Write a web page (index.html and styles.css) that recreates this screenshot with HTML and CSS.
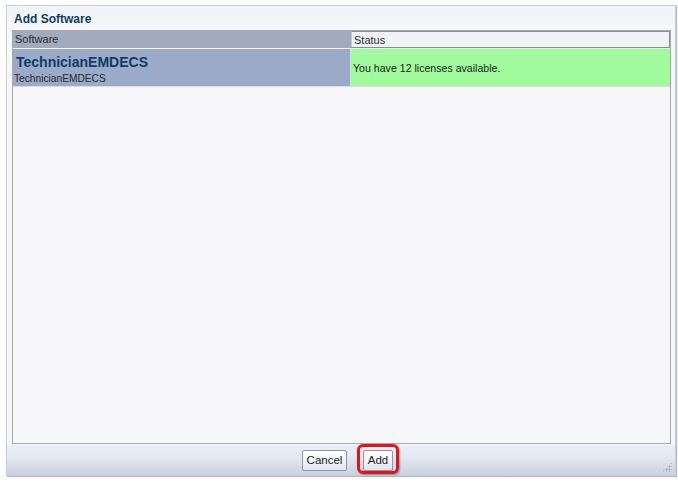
FILE: index.html
```html
<!DOCTYPE html>
<html>
<head>
<meta charset="utf-8">
<link rel="stylesheet" href="styles.css">
</head>
<body>
<div class="window">
  <div class="title">Add Software</div>
  <div class="table">
    <div class="thead">
      <div class="th th-soft">Software</div>
      <div class="th th-status">Status</div>
    </div>
    <div class="row">
      <div class="cell cell-soft">
        <div class="name">TechnicianEMDECS</div>
        <div class="sub">TechnicianEMDECS</div>
      </div>
      <div class="cell cell-status">You have 12 licenses available.</div>
    </div>
  </div>
  <div class="footer">
    <button class="btn btn-cancel">Cancel</button>
    <span class="add-wrap">
      <button class="btn btn-add">Add</button>
      <span class="highlight"></span>
    </span>
    <span class="grip"></span>
  </div>
</div>
</body>
</html>
```
FILE: styles.css
```css
html, body {
  margin: 0;
  padding: 0;
  background: #ffffff;
}
body {
  font-family: "Liberation Sans", Arial, sans-serif;
  width: 678px;
  height: 482px;
  overflow: hidden;
}
.window {
  position: relative;
  margin: 5px 0 0 6px;
  width: 668px;
  height: 469px;
  border: 1px solid #c9ccd3;
  box-shadow: 1px 1px 1px #b8bbc2;
  background: linear-gradient(#f2f4f9, #f6f7fa 30px);
  display: flex;
  flex-direction: column;
}
.title {
  height: 24px;
  padding: 6px 0 0 7px;
  box-sizing: border-box;
  font-size: 12px;
  font-weight: bold;
  color: #0d3d66;
}
.table {
  margin: 0 4px 0 5px;
  flex: 1;
  border: 1px solid #a9a9ab;
  background: #f7f7f9;
  display: flex;
  flex-direction: column;
}
.thead {
  display: flex;
  height: 17px;
}
.th {
  font-size: 11px;
  color: #2e2e2e;
  line-height: 16px;
  padding-left: 2px;
  box-sizing: border-box;
}
.th-soft {
  width: 338px;
  background: #a2abbc;
  border-bottom: 1px solid #a2abbc;
}
.th-status {
  flex: 1;
  background: #f1f2f6;
  border: 1px solid #8c8c90;
  border-left: 1px solid #c2c6cf;
}
.row {
  display: flex;
  height: 37px;
  border-top: 1px solid #f7f7f9;
  border-bottom: 1px solid #dcdde2;
}
.cell {
  box-sizing: border-box;
}
.cell-soft {
  width: 338px;
  background: #9aaac8;
  padding: 4px 0 0 1px;
  border-right: 1px solid #d6dbe6;
}
.name {
  font-size: 14px;
  font-weight: bold;
  color: #0e3d69;
  line-height: 18px;
  padding-left: 2px;
}
.sub {
  font-size: 10.2px;
  color: #2a2a2a;
  line-height: 14px;
  margin-top: 1px;
}
.cell-status {
  flex: 1;
  background: #a0fb9c;
  font-size: 10.6px;
  color: #222;
  display: flex;
  align-items: center;
  padding: 0 0 0 2px;
}
.footer {
  position: relative;
  height: 30px;
  background: linear-gradient(#eaedf5, #e5e9f2 40%, #c9d1e1);
  display: flex;
  justify-content: center;
  align-items: center;
  gap: 16px;
  padding-left: 13px;
  margin-top: 1px;
}
.btn {
  font-family: "Liberation Sans", Arial, sans-serif;
  font-size: 11.5px;
  color: #1f1f1f;
  height: 21px;
  padding: 0;
  border: 1px solid #8d96a6;
  border-radius: 2px;
  background: linear-gradient(#ffffff, #eef1f6 60%, #dfe4ec);
  box-sizing: border-box;
}
.btn-cancel {
  width: 45px;
}
.add-wrap {
  position: relative;
  display: inline-flex;
}
.btn-add {
  width: 30px;
}
.highlight {
  position: absolute;
  left: -6px;
  top: -6px;
  width: 36px;
  height: 24px;
  border: 3px solid #e5121a;
  border-radius: 6px;
  box-shadow: 1px 1px 2px rgba(0,0,0,0.35);
}
.grip {
  position: absolute;
  right: 3px;
  bottom: 3px;
  width: 10px;
  height: 10px;
  background:
    radial-gradient(circle, #9aa2b2 0.8px, transparent 1.2px) 0 0 / 3px 3px;
  clip-path: polygon(100% 0, 100% 100%, 0 100%);
}
```
